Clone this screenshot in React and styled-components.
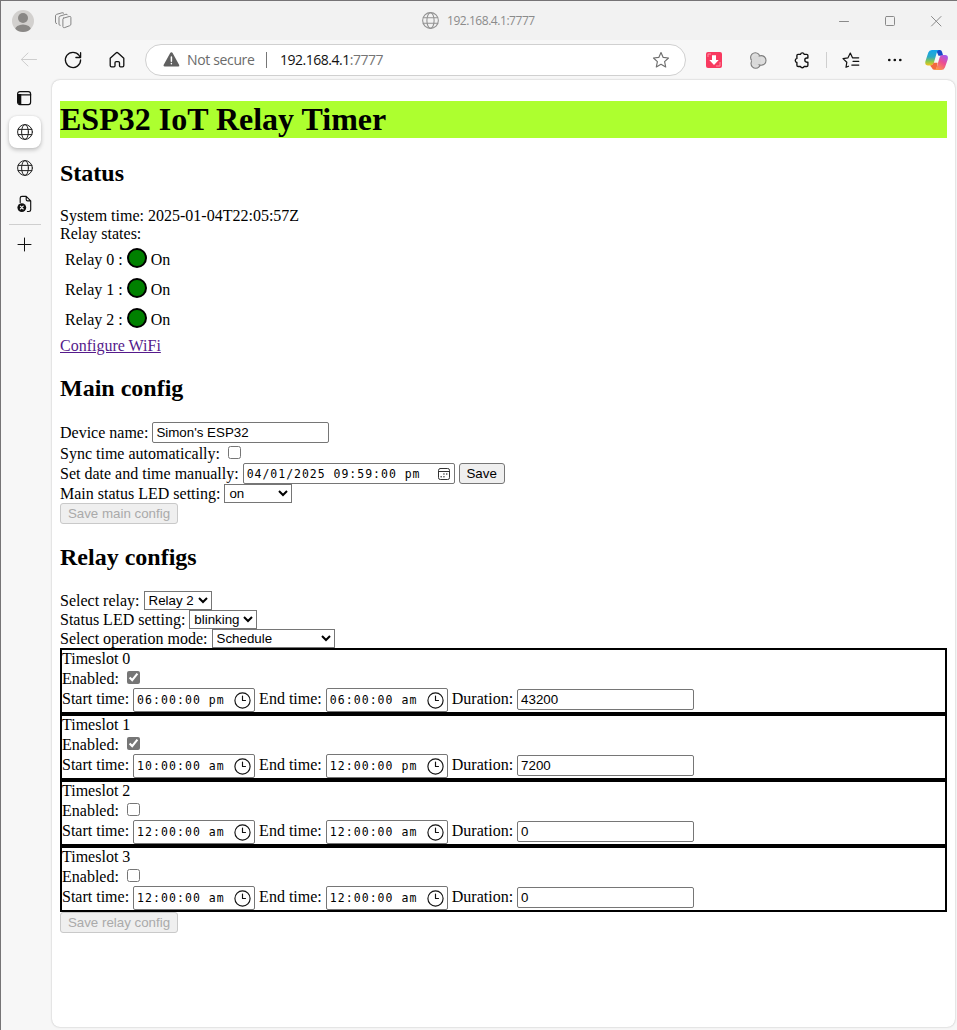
import React from "react";
import styled, { createGlobalStyle } from "styled-components";

const GlobalStyle = createGlobalStyle`
  * { box-sizing: border-box; }
  body { margin: 0; background: #f7f7f7; overflow: hidden; }
`;

const Window = styled.div`
  display: flex;
  flex-direction: column;
  width: 957px;
  height: 1030px;
  border-top: 1px solid #767476;
  border-left: 1px solid #767476;
  background: #f7f7f7;
  font-family: "Liberation Serif", "Times New Roman", serif;
  font-size: 16px;
  line-height: 18px;
  color: #000;
`;

const TitleBar = styled.header`
  display: grid;
  grid-template-columns: 421px 1fr auto;
  height: 39px;
  flex: none;
  background: #f2f2f2;
`;

const TitleLeft = styled.div`
  display: flex;
  align-items: center;
  gap: 21px;
  padding-left: 11px;
`;

const TabTitle = styled.div`
  display: flex;
  align-items: center;
  gap: 8px;
  color: #8b8b8b;
  font: 12px/16px "Open Sans", "Noto Sans", sans-serif;
  letter-spacing: -0.45px;
`;

const WindowButtons = styled.div`
  display: flex;
  align-items: center;
  gap: 30px;
  padding: 1px 13px 0 0;
`;

const Toolbar = styled.div`
  display: flex;
  align-items: center;
  height: 40px;
  flex: none;
  padding-left: 18px;
`;

const NavButtons = styled.nav`
  display: flex;
  align-items: center;
  gap: 24px;
  width: 126px;
`;

const AddressBar = styled.div`
  display: flex;
  align-items: center;
  width: 541px;
  height: 32px;
  padding: 0 15px 0 16px;
  border: 1px solid #d0d0d0;
  border-radius: 16px;
  background: #fff;
  font: 14px/20px "Open Sans", "Noto Sans", sans-serif;
  color: #111;
`;

const Security = styled.span`
  width: 79px;
  margin-left: 6px;
  letter-spacing: -0.35px;
  color: #6b6b6b;
`;

const Divider = styled.span`
  width: 1px;
  height: 16px;
  margin-right: ${(p) => p.$after || 13}px;
  background: ${(p) => p.$color || "#767676"};
`;

const Url = styled.span`
  flex: 1;
  letter-spacing: -0.48px;
  span { color: #757575; }
`;

const Actions = styled.div`
  display: flex;
  align-items: center;
  flex: 1;
  padding-left: 20px;
  svg { flex: none; }
`;

const Gap = styled.span`
  flex: none;
  width: ${(p) => p.$w}px;
`;

const Body = styled.div`
  display: flex;
  flex: 1;
  min-height: 0;
`;

const Sidebar = styled.aside`
  display: flex;
  flex-direction: column;
  align-items: center;
  width: 51px;
  padding-right: 4px;
  flex: none;
`;

const Tab = styled.div`
  display: flex;
  align-items: center;
  justify-content: center;
  width: 32px;
  height: 32px;
  margin-bottom: 4px;
  border-radius: 8px;
  ${(p) => p.$active && "background: #fff; box-shadow: 0 2px 4px rgba(0,0,0,.22), 0 0 2px rgba(0,0,0,.1);"}
`;

const LayoutTab = styled(Tab)`
  padding: 3px 2px 0 0;
`;

const SideRule = styled.div`
  width: 32px;
  height: 1px;
  background: #cfcfcf;
  margin-bottom: 4px;
`;

const Page = styled.main`
  width: 903px;
  height: 947px;
  padding: 21px 8px 0;
  border-radius: 8px;
  background: #fff;
  box-shadow: 0 0 2px rgba(0, 0, 0, 0.28);
`;

const Title = styled.h1`
  height: 37px;
  margin: 0;
  background: greenyellow;
  font-size: 32px;
  line-height: 37px;
`;

const Heading = styled.h2`
  height: 27px;
  margin: ${(p) => p.$top ?? 20}px 0 20px;
  font-size: 24px;
  line-height: 27px;
`;

const Row = styled.div`
  display: flex;
  align-items: center;
  height: ${(p) => p.$h || 18}px;
  gap: 4px;
  white-space: nowrap;
`;

const RelayRow = styled(Row)`
  height: 30px;
  padding: 2px 0 0 5px;
`;

const LinkRow = styled(Row)`
  height: 22px;
  padding-top: 4px;
`;

const CheckRow = styled(Row)`
  height: 20px;
  padding-top: 2px;
`;

const TimeRow = styled(Row)`
  height: 24px;
  padding-bottom: 2px;
`;

const RelayLabel = styled.span`
  padding-top: 2px;
`;

const Lamp = styled.span`
  width: 20px;
  height: 20px;
  margin-bottom: 2px;
  border: 2px solid #000;
  border-radius: 50%;
  background: green;
`;

const Link = styled.a`
  color: #551a8b;
  text-decoration: underline;
`;

const TextInput = styled.input`
  width: 177px;
  height: 21px;
  margin: 0;
  padding: 1px 2px 1px 3px;
  border: 1px solid #767676;
  border-radius: 2px;
  background: #fff;
  color: #000;
  font: 13.333px "Liberation Sans", Arial, sans-serif;
`;

const Check = styled.input.attrs({ type: "checkbox", readOnly: true })`
  width: 13px;
  height: 13px;
  margin: 0 0 3px 4px;
  accent-color: #767676;
`;

const Select = styled.select`
  width: ${(p) => p.$w}px;
  height: 19px;
  margin: 0;
  padding: 0;
  border: 1px solid #767676;
  border-radius: 0;
  background: #fff;
  color: #000;
  font: 13.333px "Liberation Sans", Arial, sans-serif;
`;

const Button = styled.button`
  display: block;
  width: ${(p) => p.$w}px;
  height: 21px;
  margin: 0;
  padding: 0;
  border: 1px solid ${(p) => (p.disabled ? "#c9c9c9" : "#767676")};
  border-radius: 3px;
  background: #efefef;
  color: ${(p) => (p.disabled ? "#aaa" : "#000")};
  font: 13.333px "Liberation Sans", Arial, sans-serif;
`;

const Picker = styled.span`
  display: flex;
  align-items: center;
  justify-content: space-between;
  width: 212px;
  height: 21px;
  padding: 0 4px 0 3px;
  border: 1px solid #767676;
  border-radius: 2px;
  font: 11.5px/18px "DejaVu Sans Mono", monospace;
  white-space: pre;
`;

const TimePicker = styled(Picker)`
  width: 122px;
  height: 24px;
  margin-top: 2px;
  padding-right: 3px;
`;

const Stamp = styled.span`
  padding-top: ${(p) => p.$drop || 0}px;
  letter-spacing: ${(p) => p.$spacing || 1.05}px;
`;

const Slot = styled.section`
  height: 66px;
  border: 2px solid #000;
`;

const Icon = ({ size = 16, w, h, box, stroke = "#1b1b1b", sw = 1, children }) => (
  <svg width={w || size} height={h || size} viewBox={box || `0 0 ${w || size} ${h || size}`}
    fill="none" stroke={stroke} strokeWidth={sw} strokeLinecap="round" strokeLinejoin="round">
    {children}
  </svg>
);

const Globe = ({ color = "#222", size = 16 }) => (
  <Icon size={size} box="0 0 16 16" stroke={color}>
    <circle cx="8" cy="8" r="7.4" />
    <ellipse cx="8" cy="8" rx="3.4" ry="7.4" />
    <path d="M1.2 5.4h13.6M1.2 10.6h13.6" />
  </Icon>
);

const Avatar = () => (
  <svg width="22" height="22" viewBox="0 0 22 22">
    <defs><clipPath id="face"><circle cx="11" cy="11" r="11" /></clipPath></defs>
    <circle cx="11" cy="11" r="11" fill="#d2d0ce" />
    <g fill="#8a8886" clipPath="url(#face)">
      <circle cx="11" cy="8" r="5" />
      <ellipse cx="11" cy="19.7" rx="8" ry="5.2" />
    </g>
  </svg>
);

const Workspaces = () => (
  <Icon w={17} h={17} stroke="#858585">
    <path d="M8.4 6.2 14.2 4.5q1.7-.4 1.7 1v6.6q0 1.2-1.2 1.6l-5 1.9q-1.7.5-1.8-1V7.2q0-.8.5-1Z" />
    <path d="M5.2 13.4q-1.2.1-1.2-1.2V5.4q0-1 1-1.3l5.9-1.8q1.3-.3 1.7.6M1.6 11.6Q.5 11.5.5 10.2V3.8q0-1 1-1.4L7 .8Q8.3.5 8.8 1.3" />
  </Icon>
);

const Calendar = () => (
  <Icon w={12} h={12} stroke="#333">
    <rect x=".5" y=".5" width="11" height="11" rx="1.8" />
    <path d="M.5 3.5h11" />
    <path d="M5.9 6h.1M8.7 6h.1M3.1 8.7h.1M5.9 8.7h.1" strokeWidth="1.4" />
  </Icon>
);

const Clock = () => (
  <Icon size={17} stroke="#111" sw={1.15}>
    <circle cx="8.5" cy="8.5" r="7.6" />
    <path d="M8.5 4v4.5h3" />
  </Icon>
);

const Copilot = () => (
  <svg width="23" height="22" viewBox="0 0 23 22">
    <defs>
      <linearGradient id="cpA" x1="0" y1="0" x2="0" y2="1">
        <stop offset="0" stopColor="#12a5ed" /><stop offset=".45" stopColor="#2baac4" />
        <stop offset=".75" stopColor="#8fc64a" /><stop offset="1" stopColor="#f4c31a" />
      </linearGradient>
      <linearGradient id="cpB" x1="0.8" y1="0" x2="0.2" y2="1">
        <stop offset="0" stopColor="#a458f0" /><stop offset=".45" stopColor="#ec4c92" />
        <stop offset="1" stopColor="#ff9b42" />
      </linearGradient>
    </defs>
    <path d="M11 1h4q1.5 0 2 1.7l1.2 4h-4.7Z" fill="#1749c9" />
    <path d="M6.8 1h7q-1.4.4-2 2.6L8.9 13.8Q8 16.4 5.4 16.4H3Q-.6 16.4.5 12L3.3 3.6Q4.2 1 6.8 1Z" fill="url(#cpA)" />
    <path d="M5 16.4q2.8.2 3.6-2.6h4l-1.2 7H9q-1.6 0-2-1.7Z" fill="#f26a3c" />
    <path d="M16.2 21H9.4q1.7-.4 2.3-2.8l3-10Q15.4 6 17.8 6h2.4q3.5 0 2.5 4.4l-2.8 8Q19 21 16.2 21Z" fill="url(#cpB)" />
  </svg>
);

const BrowserTop = () => (
  <>
    <TitleBar>
      <TitleLeft><Avatar /><Workspaces /></TitleLeft>
      <TabTitle><Globe color="#929292" size={17} />192.168.4.1:7777</TabTitle>
      <WindowButtons>
        <Icon w={16} h={16} stroke="#8a8a8a"><path d="M3.5 8.5h9" /></Icon>
        <Icon w={16} h={16} stroke="#8a8a8a"><rect x="3.5" y="3.5" width="9" height="9" rx="1" /></Icon>
        <Icon w={16} h={16} stroke="#8a8a8a"><path d="m3.5 3.5 9.5 9.5m0-9.5-9.5 9.5" /></Icon>
      </WindowButtons>
    </TitleBar>
    <Toolbar>
      <NavButtons>
        <Icon w={20} h={20} stroke="#cecece"><path d="M17.5 9.5h-15M9 3 2.3 9.5 9 16" /></Icon>
        <Icon w={20} h={20} stroke="#111" sw={1.3}><path d="M17.6 10a7.6 7.6 0 1 1-1.5-4.6l1.5 1.9M17.6 2.7v4.8h-4.7" /></Icon>
        <Icon w={20} h={20} stroke="#111" sw={1.3}><path d="m3.2 8.3 5.8-5.4q1-.8 2 0l5.8 5.4v7.2q0 1.3-1.3 1.3h-2q-1 0-1-1v-3q0-1.2-1.2-1.2H9.2q-1.2 0-1.2 1.2v3q0 1-1 1H4.5q-1.3 0-1.3-1.3Z" /></Icon>
      </NavButtons>
      <AddressBar>
        <svg width="19" height="18" viewBox="0 0 19 18">
          <path d="M9.4 1.2q.8 0 1.2.7l6.6 12q.6 1.5-1 1.6H2.6q-1.5-.2-1-1.6l6.6-12q.5-.7 1.2-.7Z" fill="#606060" />
          <path d="M9.4 6v4.2M9.4 12.5v.2" stroke="#fff" strokeWidth="1.5" strokeLinecap="round" />
        </svg>
        <Security>Not secure</Security>
        <Divider />
        <Url>192.168.4.1<span>:7777</span></Url>
        <Icon w={18} h={18} stroke="#6e6e6e" sw={1.15}>
          <path d="m9 1.5 2.2 4.9 5.3.6-3.9 3.6 1.1 5.4L9 13.3 4.3 16l1.1-5.4L1.5 7l5.3-.6Z" />
        </Icon>
      </AddressBar>
      <Actions>
        <svg width="16" height="16" viewBox="0 0 16 16">
          <rect width="16" height="16" rx="2" fill="#f83a60" />
          <path d="M5 2H2v3M14 10v4h-4" stroke="#ff8da3" fill="none" />
          <path d="M6 3.3h4V8h2.7L8 13 3.3 8H6Z" fill="#fff" />
        </svg>
        <Gap $w={28} />
        <Icon w={17} h={17} stroke="#7b7b7b" sw={1.1}>
          <circle cx="5.3" cy="5.4" r="4.7" fill="#ddd" /><circle cx="5.7" cy="11.5" r="4.7" fill="#ddd" /><circle cx="11.2" cy="8.4" r="4.8" fill="#ddd" />
          <circle cx="6.4" cy="8.4" r="4.7" fill="#d9d9d9" stroke="none" />
        </Icon>
        <Gap $w={26} />
        <Icon w={18} h={18} stroke="#111" sw={1.35}>
          <path d="M5 3.4h2.5a1.9 1.9 0 0 1 3.7 0h2.5q1.2 0 1.2 1.2V7h-1a2.1 2.1 0 0 0 0 4.2h1v3q0 1.3-1.2 1.3h-2.6a1.9 1.9 0 0 1-3.6 0H5.2q-1.3 0-1.3-1.3v-2.7a2.1 2.1 0 0 1 0-4.1V4.6q0-1.2 1.1-1.2Z" />
        </Icon>
        <Gap $w={15} />
        <Divider $color="#cfcfcf" $after={14} />
        <Icon w={20} h={18} stroke="#111" sw={1.2}>
          <path d="M7.5 15.2 5 16.3l.8-5L2 7.6l5-.8 2.3-4.7 2.2 4.7h6.2M12 10.3h5.8M10.8 14.1h7" />
        </Icon>
        <Gap $w={26} />
        <svg width="16" height="4" viewBox="0 0 16 4"><g fill="#111"><circle cx="2.3" cy="2" r="1.35" /><circle cx="7.8" cy="2" r="1.35" /><circle cx="13.3" cy="2" r="1.35" /></g></svg>
        <Gap $w={22} />
        <Copilot />
      </Actions>
    </Toolbar>
  </>
);

const SideTabs = () => (
  <Sidebar>
    <LayoutTab>
      <Icon w={16} h={16} stroke="#111" sw={1.2}>
        <rect x="1.6" y="1.6" width="13" height="13" rx="2.3" />
        <path d="M1.7 4.8h13" /><path d="M2 4h3.3v10.5H3.5Q2 14 2 12.5Z" fill="#111" stroke="none" />
      </Icon>
    </LayoutTab>
    <Tab $active><Globe /></Tab>
    <Tab><Globe /></Tab>
    <Tab>
      <Icon w={16} h={18} stroke="#111" sw={1.15}>
        <path d="M3.2 7.5V3q0-1.7 1.8-1.7h4.2l4.5 4.5v9q0 1.7-1.8 1.7h-1.5M9.2 1.5v3q0 1.4 1.4 1.4h3" />
        <circle cx="4.8" cy="12.6" r="4.4" fill="#111" stroke="none" />
        <path d="m3.4 11.2 2.8 2.8m0-2.8L3.4 14" stroke="#fff" />
      </Icon>
    </Tab>
    <SideRule />
    <Tab><Icon w={16} h={16} stroke="#111"><path d="M7.5 1v13M1 7.5h13" /></Icon></Tab>
  </Sidebar>
);

const TimeField = ({ value }) => (
  <TimePicker><Stamp>{value}</Stamp><Clock /></TimePicker>
);

const Dropdown = ({ value, width }) => (
  <Select $w={width} defaultValue={value}><option>{value}</option></Select>
);

const slots = [
  { enabled: true, start: "06:00:00 pm", end: "06:00:00 am", duration: "43200" },
  { enabled: true, start: "10:00:00 am", end: "12:00:00 pm", duration: "7200" },
  { enabled: false, start: "12:00:00 am", end: "12:00:00 am", duration: "0" },
  { enabled: false, start: "12:00:00 am", end: "12:00:00 am", duration: "0" },
];

export default function App() {
  return (
    <Window>
      <GlobalStyle />
      <BrowserTop />
      <Body>
        <SideTabs />
        <Page>
          <Title>ESP32 IoT Relay Timer</Title>
          <Heading $top={22}>Status</Heading>
          <Row>System time: 2025-01-04T22:05:57Z</Row>
          <Row>Relay states:</Row>
          {[0, 1, 2].map((n) => (
            <RelayRow key={n}>
              <RelayLabel>Relay {n} :</RelayLabel><Lamp /><RelayLabel>On</RelayLabel>
            </RelayRow>
          ))}
          <LinkRow><Link>Configure WiFi</Link></LinkRow>
          <Heading>Main config</Heading>
          <Row $h={21}>Device name: <TextInput defaultValue="Simon's ESP32" /></Row>
          <CheckRow>Sync time automatically: <Check /></CheckRow>
          <Row $h={21}>
            Set date and time manually:
            <Picker><Stamp $spacing={0.98} $drop={1}>04/01/2025 09:59:00 pm</Stamp><Calendar /></Picker>
            <Button $w={46}>Save</Button>
          </Row>
          <Row $h={19}>Main status LED setting: <Dropdown value="on" width={68} /></Row>
          <Button $w={118} disabled>Save main config</Button>
          <Heading>Relay configs</Heading>
          <Row $h={19}>Select relay: <Dropdown value="Relay 2" width={68} /></Row>
          <Row $h={19}>Status LED setting: <Dropdown value="blinking" width={68} /></Row>
          <Row $h={19}>Select operation mode: <Dropdown value="Schedule" width={123} /></Row>
          {slots.map((slot, i) => (
            <Slot key={i}>
              <Row>Timeslot {i}</Row>
              <CheckRow>Enabled: <Check defaultChecked={slot.enabled} /></CheckRow>
              <TimeRow>
                Start time: <TimeField value={slot.start} />
                End time: <TimeField value={slot.end} />
                Duration: <TextInput defaultValue={slot.duration} />
              </TimeRow>
            </Slot>
          ))}
          <Button $w={118} disabled>Save relay config</Button>
        </Page>
      </Body>
    </Window>
  );
}
